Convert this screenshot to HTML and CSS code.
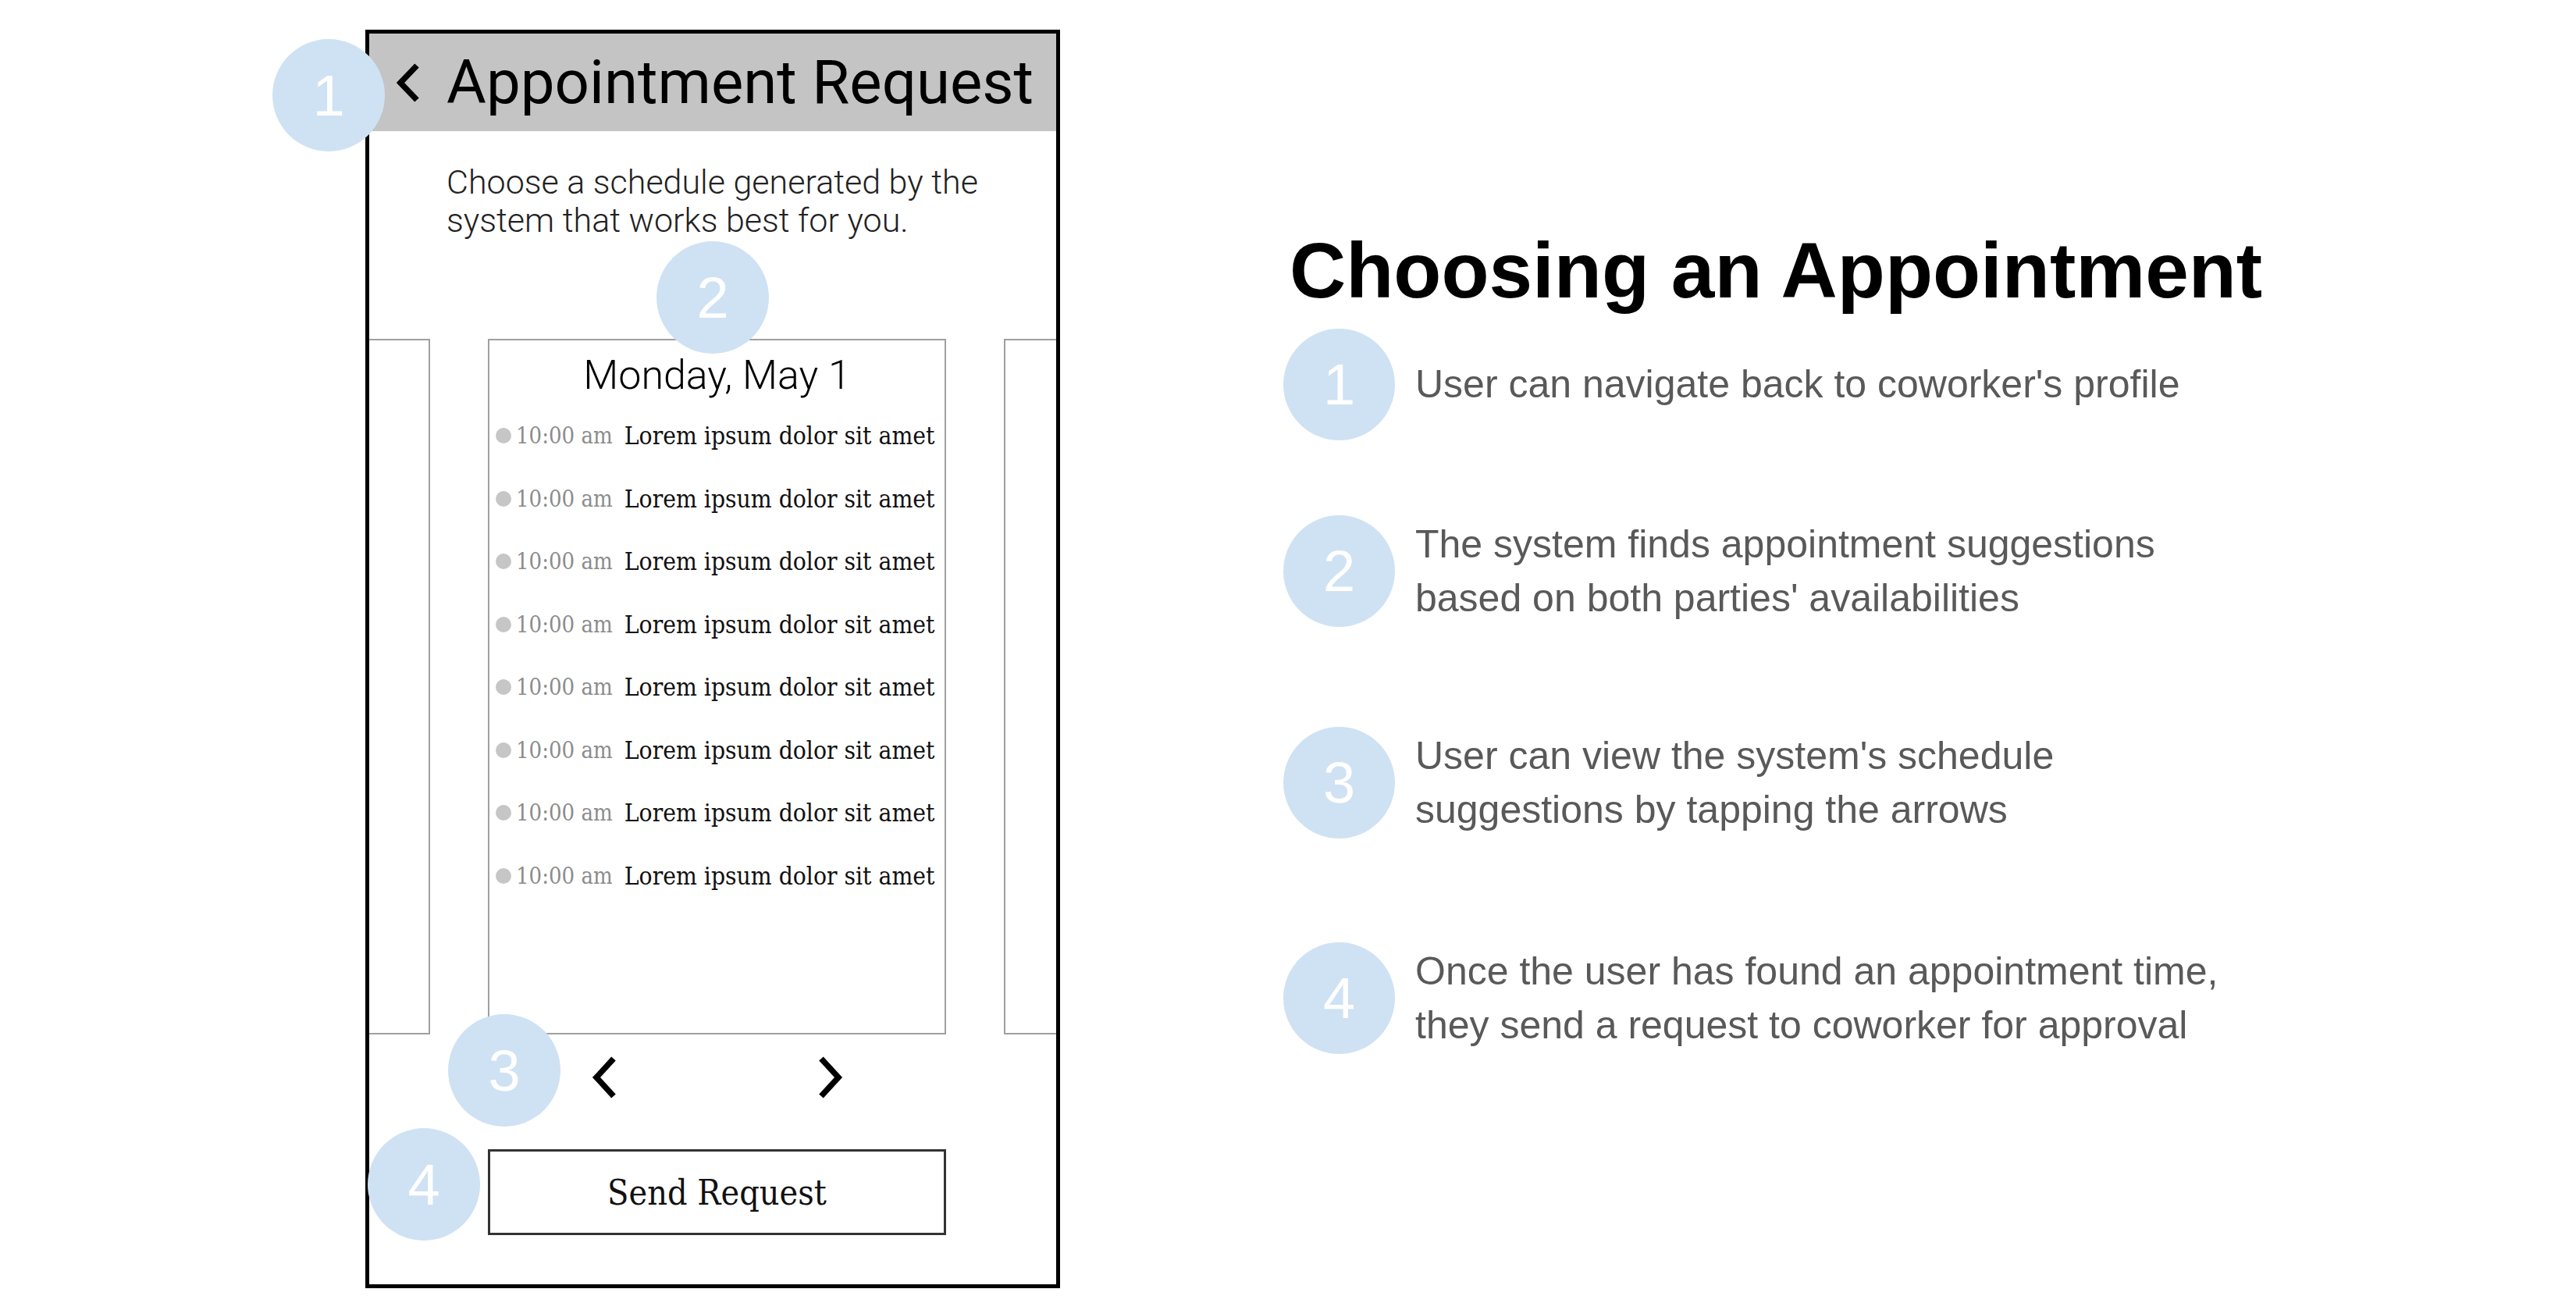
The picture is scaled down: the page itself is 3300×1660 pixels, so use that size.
FILE: index.html
```html
<!DOCTYPE html>
<html lang="en">
<head>
    <meta charset="UTF-8">
    <meta name="viewport" content="width=device-width, initial-scale=1.0">
    <title>Choosing an Appointment</title>
    <link rel="stylesheet" href="styles.css">
</head>
<body>
    <div class="board">
        <section class="phone">
            <header class="phone-bar">
                <svg class="back-icon" width="32" height="52" viewBox="0 0 32 52">
                    <polyline points="27,4 6,26 27,48" fill="none" stroke="#000" stroke-width="7.5"/>
                </svg>
                <h1>Appointment Request</h1>
            </header>

            <p class="intro">Choose a schedule generated by the<br>system that works best for you.</p>

            <div class="carousel">
                <div class="day-card side"></div>
                <div class="day-card">
                    <h2>Monday, May 1</h2>
                    <ul class="slots">
                        <li><span class="dot"></span><span class="time">10:00 am</span><span class="what">Lorem ipsum dolor sit amet</span></li>
                        <li><span class="dot"></span><span class="time">10:00 am</span><span class="what">Lorem ipsum dolor sit amet</span></li>
                        <li><span class="dot"></span><span class="time">10:00 am</span><span class="what">Lorem ipsum dolor sit amet</span></li>
                        <li><span class="dot"></span><span class="time">10:00 am</span><span class="what">Lorem ipsum dolor sit amet</span></li>
                        <li><span class="dot"></span><span class="time">10:00 am</span><span class="what">Lorem ipsum dolor sit amet</span></li>
                        <li><span class="dot"></span><span class="time">10:00 am</span><span class="what">Lorem ipsum dolor sit amet</span></li>
                        <li><span class="dot"></span><span class="time">10:00 am</span><span class="what">Lorem ipsum dolor sit amet</span></li>
                        <li><span class="dot"></span><span class="time">10:00 am</span><span class="what">Lorem ipsum dolor sit amet</span></li>
                    </ul>
                </div>
                <div class="day-card side"></div>
            </div>

            <nav class="pager">
                <svg width="36" height="56" viewBox="0 0 36 56">
                    <polyline points="30,4 8,28 30,52" fill="none" stroke="#000" stroke-width="7.5"/>
                </svg>
                <svg width="36" height="56" viewBox="0 0 36 56">
                    <polyline points="6,4 28,28 6,52" fill="none" stroke="#000" stroke-width="7.5"/>
                </svg>
            </nav>

            <button class="send-btn" type="button">Send Request</button>

            <span class="marker m1">1</span>
            <span class="marker m2">2</span>
            <span class="marker m3">3</span>
            <span class="marker m4">4</span>
        </section>

        <section class="notes">
            <h2 class="notes-title">Choosing an Appointment</h2>
            <ol class="steps">
                <li class="step"><span class="bubble">1</span><p>User can navigate back to coworker's profile</p></li>
                <li class="step"><span class="bubble">2</span><p>The system finds appointment suggestions<br>based on both parties' availabilities</p></li>
                <li class="step"><span class="bubble">3</span><p>User can view the system's schedule<br>suggestions by tapping the arrows</p></li>
                <li class="step"><span class="bubble">4</span><p>Once the user has found an appointment time,<br>they send a request to coworker for approval</p></li>
            </ol>
        </section>
    </div>
</body>
</html>
```

FILE: styles.css
```css
body {
    margin: 0;
    background-color: #fff;
    color: #000;
    font-family: "Liberation Sans", Arial, sans-serif;
}

.board {
    display: flex;
    align-items: flex-start;
    padding: 38px 0 0 468px;
    gap: 286px;
}

/* phone mockup */

.phone {
    position: relative;
    width: 880px;
    height: 1602px;
    border: 5px solid #000;
    display: flex;
    flex-direction: column;
    font-family: Roboto, "Noto Sans", sans-serif;
}

.phone-bar {
    height: 125px;
    background-color: #c4c4c4;
    display: flex;
    align-items: center;
    padding-left: 34px;
    gap: 33px;
}

.phone-bar h1 {
    margin: 0;
    font-size: 78px;
    font-weight: 400;
    line-height: 1;
}

.intro {
    margin: 41px 0 0 99px;
    font-size: 43px;
    font-weight: 300;
    line-height: 49px;
    color: #222;
}

.carousel {
    margin-top: 127px;
    height: 891px;
    display: flex;
    justify-content: center;
    gap: 74px;
    padding-left: 11px;
    overflow: hidden;
}

.day-card {
    flex: 0 0 587px;
    box-sizing: border-box;
    border: 2px solid #a0a0a0;
    padding-top: 15px;
}

.day-card h2 {
    margin: 0;
    text-align: center;
    font-size: 52px;
    font-weight: 300;
    line-height: 60px;
}

.slots {
    list-style: none;
    margin: 7px 0 0;
    padding: 0 0 0 8px;
}

.slots li {
    height: 80.5px;
    display: flex;
    align-items: center;
    font-family: "DejaVu Serif Condensed", "DejaVu Serif", serif;
    font-stretch: condensed;
}

.dot {
    width: 20px;
    height: 20px;
    border-radius: 50%;
    background-color: #c6c6c6;
    margin-right: 6px;
}

.time {
    font-size: 29px;
    color: #8c8c8c;
    margin-right: 15px;
}

.what {
    font-size: 31.5px;
    color: #111;
}

.pager {
    height: 110px;
    margin-left: 152px;
    width: 587px;
    display: flex;
    align-items: center;
    justify-content: center;
    gap: 254px;
}

.send-btn {
    margin: 37px 0 0 152px;
    width: 587px;
    height: 110px;
    background-color: #fff;
    border: 3px solid #333;
    font-family: "DejaVu Serif Condensed", "DejaVu Serif", serif;
    font-stretch: condensed;
    font-size: 44.5px;
    color: #111;
}

.marker {
    position: absolute;
    width: 144px;
    height: 144px;
    border-radius: 50%;
    background-color: #cfe2f3;
    color: #fff;
    font-family: "Liberation Sans", Arial, sans-serif;
    font-size: 74px;
    display: flex;
    align-items: center;
    justify-content: center;
}

.m1 { left: -124px; top: 7px; }
.m2 { left: 368px; top: 266px; }
.m3 { left: 101px; top: 1256px; }
.m4 { left: -2px; top: 1402px; }

/* annotation column */

.notes-title {
    margin: 251px 0 0;
    padding-left: 8px;
    font-size: 100px;
    font-weight: bold;
    line-height: 115px;
}

.steps {
    list-style: none;
    margin: 0;
    padding: 0;
}

.step {
    display: flex;
    align-items: center;
    gap: 26px;
}

.step:nth-child(1) { margin-top: 17px; }
.step:nth-child(2) { margin-top: 96px; }
.step:nth-child(3) { margin-top: 128px; }
.step:nth-child(4) { margin-top: 133px; }

.bubble {
    flex: 0 0 143px;
    height: 143px;
    border-radius: 50%;
    background-color: #cfe2f3;
    color: #fff;
    font-size: 74px;
    display: flex;
    align-items: center;
    justify-content: center;
}

.step p {
    margin: 0;
    font-size: 50px;
    line-height: 69px;
    color: #595959;
}
```
